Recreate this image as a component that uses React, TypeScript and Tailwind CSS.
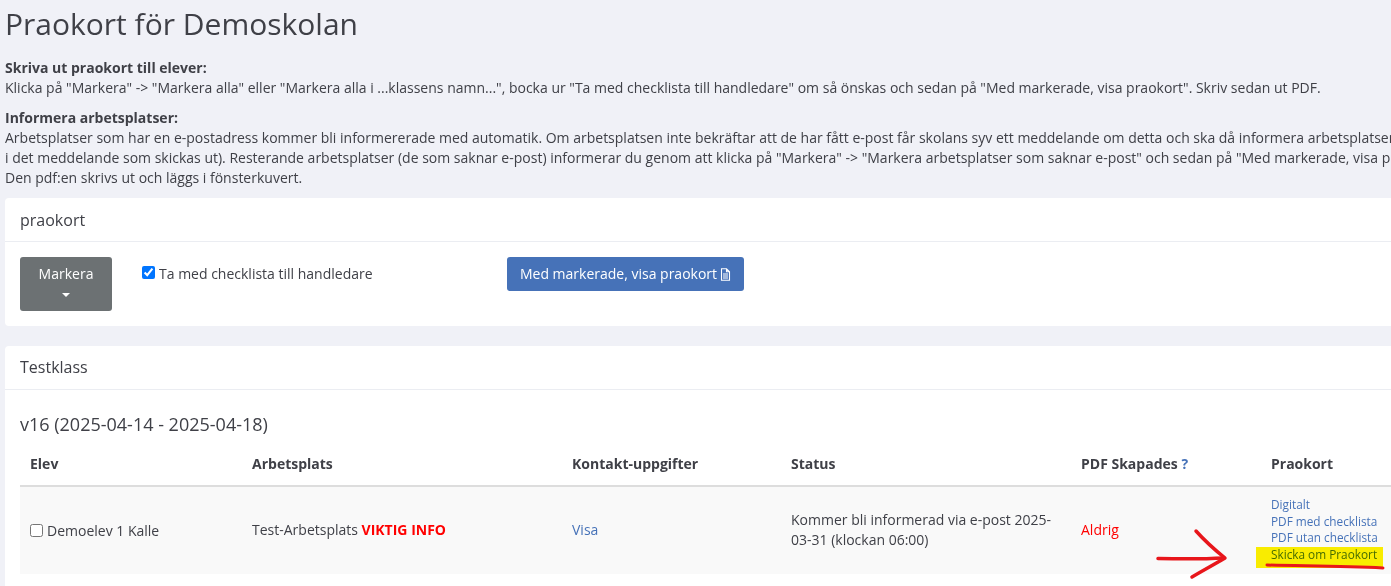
export default function App() {
  return (
    <div className="relative h-[586px] w-[1391px] overflow-hidden bg-[#f0f1f7] pl-[5px] font-['Open_Sans',sans-serif] text-[14px] leading-[20px] text-[#3f4047]">
      <div className="w-[1500px]">
        <h1 className="h-[58px] pt-[4px] text-[30px] leading-[40px] font-normal">Praokort för Demoskolan</h1>
        <p><b className="font-bold">Skriva ut praokort till elever:</b><br />Klicka på "Markera" -&gt; "Markera alla" eller "Markera alla i ...klassens namn...", bocka ur "Ta med checklista till handledare" om så önskas och sedan på "Med markerade, visa praokort". Skriv sedan ut PDF.</p>
        <p className="mt-[10px] whitespace-nowrap"><b className="font-bold">Informera arbetsplatser:</b><br />Arbetsplatser som har en e-postadress kommer bli informererade med automatik. Om arbetsplatsen inte bekräftar att de har fått e-post får skolans syv ett meddelande om detta och ska då informera arbetsplatsen själv (instruktioner finns<br />i det meddelande som skickas ut). Resterande arbetsplatser (de som saknar e-post) informerar du genom att klicka på "Markera" -&gt; "Markera arbetsplatser som saknar e-post" och sedan på "Med markerade, visa praokort".<br />Den pdf:en skrivs ut och läggs i fönsterkuvert.</p>

        <section className="mt-[10px] h-[128px] rounded-[4px] bg-white">
          <div className="h-[44px] border-b border-[#ebedf2] px-[15px] pt-[11px] text-[16px] leading-[22px]">praokort</div>
          <div className="flex items-start px-[15px] pt-[15px]">
            <button className="flex h-[54px] w-[92px] flex-col items-center justify-start rounded-[3px] bg-[#6c7173] pt-[7px] text-white">
              <span className="block leading-[20px]">Markera</span>
              <span className="mt-[9px] block h-0 w-0 border-x-[4px] border-t-[4px] border-x-transparent border-t-white" />
            </button>
            <label className="ml-[30px] flex h-[32px] w-[365px] items-start pt-[7px]">
              <input type="checkbox" defaultChecked className="mt-[2px] mr-[4px] h-[13px] w-[13px] accent-[#0075ff]" />
              <span className="leading-[20px]">Ta med checklista till handledare</span>
            </label>
            <button className="flex h-[34px] w-[237px] items-center justify-center gap-[3px] rounded-[3px] bg-[#4672b8] text-white">
              Med markerade, visa praokort
              <svg width="11" height="13" viewBox="0 0 11 13" fill="none" stroke="white" strokeWidth="1.1"><path d="M1.5 .8h5l3 3v8.4h-8zM6.5 .8v3h3M3 6h5M3 8h5M3 10h5" /></svg>
            </button>
          </div>
        </section>

        <section className="mt-[20px] h-[300px] rounded-[4px] bg-white">
          <div className="h-[44px] border-b border-[#ebedf2] px-[15px] pt-[10px] text-[16px] leading-[22px]">Testklass</div>
          <div className="px-[15px] pt-[22px]">
            <h3 className="text-[18px] leading-[24px] font-normal">v16 (2025-04-14 - 2025-04-18)</h3>
            <table className="mt-[8px] w-[1400px] table-fixed border-collapse text-left">
              <colgroup>
                <col className="w-[222px]" /><col className="w-[320px]" /><col className="w-[219px]" /><col className="w-[290px]" /><col className="w-[190px]" /><col className="w-[159px]" />
              </colgroup>
              <thead>
                <tr className="h-[42px] border-b-2 border-[#dddddd]">
                  <th className="px-[10px] pb-[2px] font-bold">Elev</th>
                  <th className="px-[10px] pb-[2px] font-bold">Arbetsplats</th>
                  <th className="px-[10px] pb-[2px] font-bold">Kontakt-uppgifter</th>
                  <th className="px-[10px] pb-[2px] font-bold">Status</th>
                  <th className="px-[10px] pb-[2px] font-bold">PDF Skapades <span className="text-[#4672b8]">?</span></th>
                  <th className="px-[10px] pb-[2px] font-bold">Praokort</th>
                </tr>
              </thead>
              <tbody>
                <tr className="h-[88px] bg-[#f9f9f9]">
                  <td className="px-[10px]"><label className="flex items-center"><input type="checkbox" className="mr-[4px] mb-[1px] h-[13px] w-[13px]" /><span>Demoelev 1 Kalle</span></label></td>
                  <td className="px-[10px] pb-[2px]">Test-Arbetsplats <b className="font-bold text-[#ff0000]">VIKTIG INFO</b></td>
                  <td className="px-[10px] pb-[2px]"><a className="text-[#4672b8]">Visa</a></td>
                  <td className="px-[10px] pb-[2px]">Kommer bli informerad via e-post 2025-03-31 (klockan 06:00)</td>
                  <td className="px-[10px] pb-[2px] text-[#ff0000]">Aldrig</td>
                  <td className="px-[10px] pb-[3px] text-[11.8px] leading-[16.5px] text-[#4672b8]">
                    <a className="block">Digitalt</a>
                    <a className="block">PDF med checklista</a>
                    <a className="block">PDF utan checklista</a>
                    <a className="block">Skicka om Praokort</a>
                  </td>
                </tr>
              </tbody>
            </table>
          </div>
        </section>
      </div>

      <div className="absolute top-[547px] left-[1256px] h-[21px] w-[127px] bg-[#fff200] mix-blend-multiply" />
      <svg className="absolute top-0 left-0" width="1391" height="586" fill="none" stroke="#e8161b" strokeLinecap="round" strokeLinejoin="round">
        <path d="M1158 558.5C1180 559 1205 559 1224 558" strokeWidth="3.5" />
        <path d="M1196 531C1205 541 1215 550 1225 558C1215 564 1202 571 1192 577" strokeWidth="3.5" />
        <path d="M1267 565C1300 566 1340 566 1383 568" strokeWidth="3" />
      </svg>
    </div>
  );
}
